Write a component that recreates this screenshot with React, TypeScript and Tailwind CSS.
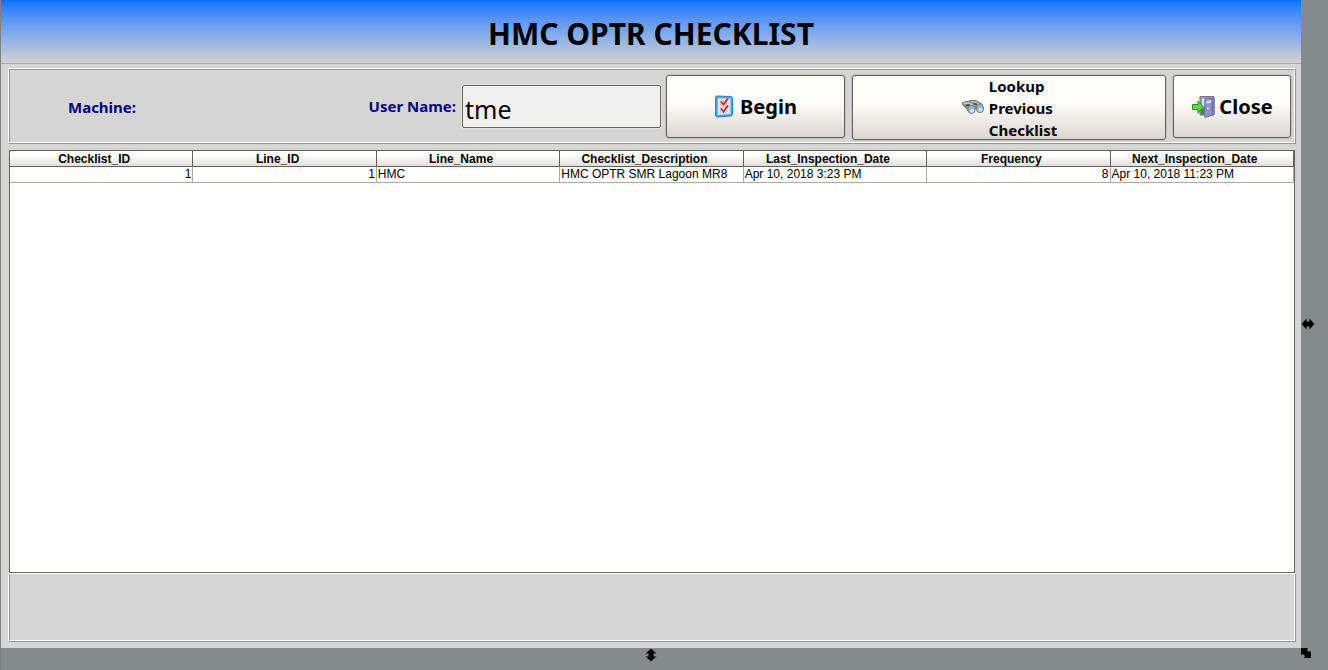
import { useState } from 'react';
import type { ReactNode } from 'react';

const columns = [
  { key: 'checklistId', title: 'Checklist_ID', numeric: true },
  { key: 'lineId', title: 'Line_ID', numeric: true },
  { key: 'lineName', title: 'Line_Name', numeric: false },
  { key: 'description', title: 'Checklist_Description', numeric: false },
  { key: 'lastInspection', title: 'Last_Inspection_Date', numeric: false },
  { key: 'frequency', title: 'Frequency', numeric: true },
  { key: 'nextInspection', title: 'Next_Inspection_Date', numeric: false },
];

const rows: Record<string, string | number>[] = [
  {
    checklistId: 1,
    lineId: 1,
    lineName: 'HMC',
    description: 'HMC OPTR SMR Lagoon MR8',
    lastInspection: 'Apr 10, 2018 3:23 PM',
    frequency: 8,
    nextInspection: 'Apr 10, 2018 11:23 PM',
  },
];

function ChecklistIcon() {
  return (
    <svg width="20" height="24" viewBox="0 0 20 24" aria-hidden="true" className="shrink-0">
      <path d="M3 1 L16.500 1.500 Q18.500 1.600 18.500 3.500 V19 Q18.500 20.800 16.800 21 L3.500 22 Q1.500 22 1.500 20 V2.500 Q1.500 1 3 1Z" fill="#4aa9ee" stroke="#2280cf" strokeWidth="1" />
      <path d="M3.800 3.200 L16.500 3.500 V19 L3.800 20Z" fill="#dfe5ea" />
      <path d="M6.500 5.500 H12.500 V10.500 H6.500Z M6.500 12.500 H12.500 V17.500 H6.500Z" fill="#f9f9f9" stroke="#c3c9ce" strokeWidth="1" />
      <path d="M7 6.500 L9.500 9.500 L14 3.500 M7 13.500 L9.500 16.500 L14 10.500" fill="none" stroke="#d02020" strokeWidth="1.800" />
    </svg>
  );
}

function BinocularsIcon() {
  return (
    <svg width="24" height="18" viewBox="0 0 24 18" aria-hidden="true" className="shrink-0">
      <path d="M1.500 3.500 L6 2.500 L11 1.500 L15 1.800 L21 5 L22 9 L17 11 L13 9 L11 13 L8 13 L5 9 L2 6Z" fill="#909090" stroke="#6a6a6a" strokeWidth="1" />
      <path d="M2.500 4.200 L8 3.800 L12 6.500 M10 2.500 L14 3 L18.500 5.500" fill="none" stroke="#cfcfcf" strokeWidth="1.200" />
      <path d="M5 6.500 L9 6 M13 4.500 L16 5.500" stroke="#444" strokeWidth="1.500" />
      <ellipse cx="10.500" cy="10.500" rx="3.500" ry="4" fill="#8dbbec" stroke="#858585" strokeWidth="1.200" />
      <ellipse cx="19" cy="9.500" rx="3.500" ry="4" fill="#8dbbec" stroke="#858585" strokeWidth="1.200" />
      <ellipse cx="11" cy="11.800" rx="1.800" ry="2" fill="#d4ebff" />
      <ellipse cx="19.500" cy="10.800" rx="1.800" ry="2" fill="#d4ebff" />
    </svg>
  );
}

function ExitIcon() {
  return (
    <svg width="24" height="24" viewBox="0 0 24 24" aria-hidden="true" className="shrink-0">
      <path d="M9 1.500 H23 V20 H9Z" fill="#9a9aa0" stroke="#77777d" strokeWidth="1" />
      <path d="M11 3.500 H21 V19 H11Z" fill="#cfe6ff" />
      <path d="M10 14 L14 12 V19.500 H10Z" fill="#2f9a25" />
      <path d="M14 3.500 L23 3 V19.500 L14.500 22.500 L13.500 21Z" fill="#9090cb" stroke="#6d6dab" strokeWidth="1" />
      <path d="M15.500 6 L20.500 5 V7.500 L15.500 8.500Z" fill="#dcdcf6" />
      <path d="M20.500 3.500 L22.500 3.300 V19.300 L20.500 20Z" fill="#7575b2" />
      <circle cx="17" cy="13.500" r="1" fill="#e6e3b4" />
      <path d="M1.500 9.500 H7 V6 L12.500 12 L7 18 V14.500 H1.500Z" fill="#66d838" stroke="#2e8b1e" strokeWidth="1" />
    </svg>
  );
}

function DoubleArrow() {
  return (
    <svg width="14" height="14" viewBox="0 0 14 14" aria-hidden="true">
      <path d="M0.500 7 L5.500 1.500 V4.500 H8.500 V1.500 L13.500 7 L8.500 12.500 V9.500 H5.500 V12.500Z" fill="#000" />
    </svg>
  );
}

function CornerArrow() {
  return (
    <svg width="10" height="10" viewBox="0 0 10 10" aria-hidden="true">
      <path d="M0 0 H7 L6 2 L8 4 L10 3 V10 H3 L4 8 L2 6 L0 7Z" fill="#000" />
    </svg>
  );
}

// Etched border: light line outside, dark line inside, swapped on the far edges
function EtchedPanel({ className = '', children }: { className?: string; children?: ReactNode }) {
  return (
    <div className="border border-t-white border-l-white border-r-[#969696] border-b-[#969696]">
      <div className={`border-x border-b border-l-[#969696] border-r-white border-b-white ${className}`}>
        {children}
      </div>
    </div>
  );
}

function PanelButton({ className = '', children }: { className?: string; children: ReactNode }) {
  return (
    <button
      type="button"
      className={`flex shrink-0 items-center justify-center rounded-[3px] border border-[#65625b] bg-linear-to-b from-[#fcfcfb] from-45% to-[#dcd6cf] font-bold text-black shadow-[0_0_0_1px_#c2c0bd] ${className}`}
    >
      {children}
    </button>
  );
}

export default function App() {
  const [userName, setUserName] = useState('tme');

  return (
    <div className="grid min-h-screen grid-cols-[1fr_27px] grid-rows-[1fr_22px] border-l border-[#808080] bg-[#838b8b] font-['Noto_Sans',sans-serif] text-black">
      <main className="flex min-w-0 flex-col bg-[#d5d5d5]">
        <header className="flex h-16 items-center justify-center border-b border-[#a9a9a9] bg-linear-to-b from-[#0872ff] to-[#d2d2d2] pt-1">
          <h1 className="text-[30px] leading-8 font-bold">HMC OPTR CHECKLIST</h1>
        </header>

        <div className="flex flex-1 flex-col pt-1 pr-[5px] pb-1.5 pl-[7px]">
          <EtchedPanel className="flex h-[74px] items-start border-t border-t-[#969696] pt-[5px] pr-[3px]">
            <div className="flex h-16 min-w-0 flex-1 items-center pl-[58px] text-[15px] font-bold text-[#000080]">
              Machine:
            </div>
            <div className="flex h-[63px] items-center gap-1.5 pr-[5px]">
              <label htmlFor="user-name" className="text-[15px] font-bold whitespace-nowrap text-[#000080]">
                User Name:
              </label>
              <input
                id="user-name"
                value={userName}
                onChange={(e) => setUserName(e.target.value)}
                className="h-[43px] w-[199px] rounded-[2px] border border-[#65655a] bg-[#f0f0f0] px-0.5 pt-1 text-[25px] leading-9 shadow-[0_0_0_1px_#e2e2de] outline-none"
              />
            </div>
            <div className="flex items-start gap-[7px]">
              <PanelButton className="h-[63px] w-[179px] gap-1.5 text-xl">
                <ChecklistIcon />
                Begin
              </PanelButton>
              <PanelButton className="h-[65px] w-[314px] gap-1 text-left text-[15px] leading-[22px]">
                <BinocularsIcon />
                <span>
                  Lookup
                  <br />
                  Previous
                  <br />
                  Checklist
                </span>
              </PanelButton>
              <PanelButton className="h-[63px] w-[118px] gap-1 text-xl">
                <ExitIcon />
                Close
              </PanelButton>
            </div>
          </EtchedPanel>

          <div className="mx-px mt-1.5 flex-1 border border-[#65625b] bg-white">
            <table className="w-full table-fixed border-separate border-spacing-0 font-['Liberation_Sans',Arial,sans-serif] text-xs">
              <thead>
                <tr>
                  {columns.map((col) => (
                    <th
                      key={col.key}
                      scope="col"
                      className="h-4 border-r border-b border-[#65625b] bg-linear-to-b from-white from-30% to-[#e2dfda] p-0 pt-px pr-3.5 text-center leading-[14px] font-bold whitespace-nowrap"
                    >
                      {col.title}
                    </th>
                  ))}
                </tr>
              </thead>
              <tbody>
                {rows.map((row) => (
                  <tr key={row.checklistId}>
                    {columns.map((col) => (
                      <td
                        key={col.key}
                        className={`h-4 overflow-hidden border-r border-b border-[#b0aca5] px-px py-0 leading-[15px] whitespace-nowrap ${col.numeric ? 'text-right' : 'text-left'}`}
                      >
                        {row[col.key]}
                      </td>
                    ))}
                  </tr>
                ))}
              </tbody>
            </table>
          </div>

          <EtchedPanel className="h-[67px]" />
        </div>
      </main>

      {/* resize handles */}
      <div className="flex cursor-ew-resize items-center justify-start">
        <DoubleArrow />
      </div>
      <div className="flex cursor-ns-resize items-start justify-center">
        <span className="rotate-90">
          <DoubleArrow />
        </span>
      </div>
      <div className="cursor-nwse-resize">
        <CornerArrow />
      </div>
    </div>
  );
}
